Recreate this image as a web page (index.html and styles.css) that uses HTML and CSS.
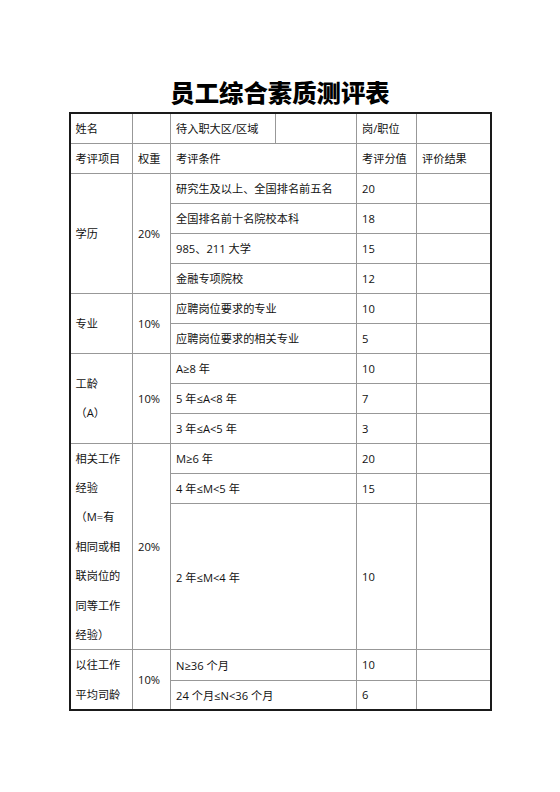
FILE: index.html
```html
<!DOCTYPE html>
<html lang="zh">
<head>
<meta charset="utf-8">
<title>员工综合素质测评表</title>
<link rel="stylesheet" href="styles.css">
</head>
<body>
<div class="page">
  <h1 class="title">员工综合素质测评表</h1>
  <table class="sheet">
    <colgroup>
      <col class="c1"><col class="c2"><col class="c3"><col class="c4"><col class="c5"><col class="c6">
    </colgroup>
    <tr class="r">
      <td>姓名</td><td></td><td>待入职大区/区域</td><td></td><td>岗/职位</td><td></td>
    </tr>
    <tr class="r">
      <td>考评项目</td><td>权重</td><td colspan="2">考评条件</td><td>考评分值</td><td>评价结果</td>
    </tr>

    <tr class="r g">
      <td rowspan="4">学历</td><td rowspan="4">20%</td><td colspan="2">研究生及以上、全国排名前五名</td><td>20</td><td></td>
    </tr>
    <tr class="r"><td colspan="2">全国排名前十名院校本科</td><td>18</td><td></td></tr>
    <tr class="r"><td colspan="2">985、211 大学</td><td>15</td><td></td></tr>
    <tr class="r"><td colspan="2">金融专项院校</td><td>12</td><td></td></tr>

    <tr class="r g">
      <td rowspan="2">专业</td><td rowspan="2">10%</td><td colspan="2">应聘岗位要求的专业</td><td>10</td><td></td>
    </tr>
    <tr class="r"><td colspan="2">应聘岗位要求的相关专业</td><td>5</td><td></td></tr>

    <tr class="r g">
      <td rowspan="3" class="multi">工龄<br>（A）</td><td rowspan="3">10%</td><td colspan="2">A≥8 年</td><td>10</td><td></td>
    </tr>
    <tr class="r"><td colspan="2">5 年≤A&lt;8 年</td><td>7</td><td></td></tr>
    <tr class="r"><td colspan="2">3 年≤A&lt;5 年</td><td>3</td><td></td></tr>

    <tr class="r g">
      <td rowspan="3" class="multi">相关工作<br>经验<br>（M=有<br>相同或相<br>联岗位的<br>同等工作<br>经验）</td><td rowspan="3">20%</td><td colspan="2">M≥6 年</td><td>20</td><td></td>
    </tr>
    <tr class="r"><td colspan="2">4 年≤M&lt;5 年</td><td>15</td><td></td></tr>
    <tr class="tall"><td colspan="2">2 年≤M&lt;4 年</td><td>10</td><td></td></tr>

    <tr class="r g">
      <td rowspan="2" class="multi">以往工作<br>平均司龄</td><td rowspan="2">10%</td><td colspan="2">N≥36 个月</td><td>10</td><td></td>
    </tr>
    <tr class="r"><td colspan="2">24 个月≤N&lt;36 个月</td><td>6</td><td></td></tr>
  </table>
</div>
</body>
</html>
```

FILE: styles.css
```css
html, body {
  margin: 0;
  padding: 0;
  background: #ffffff;
}

body {
  font-family: "Open Sans", "Noto Sans CJK SC", sans-serif;
  color: #111111;
}

.page {
  width: 560px;
  padding-top: 77px;
}

.title {
  margin: 0 0 5px 0;
  height: 30px;
  line-height: 30px;
  text-align: center;
  font-family: "Noto Sans CJK SC", sans-serif;
  font-size: 24.4px;
  font-weight: 900;
  color: #000000;
}

.sheet {
  margin: 0 auto;
  width: 421px;
  table-layout: fixed;
  border-collapse: collapse;
  border: 2px solid #1a1a1a;
  font-size: 11.2px;
}

.c1 { width: 63px; }
.c2 { width: 38px; }
.c3 { width: 105px; }
.c4 { width: 81px; }
.c5 { width: 60px; }
.c6 { width: 74px; }

.sheet td {
  border: 1px solid #989898;
  padding: 0 5px;
  vertical-align: middle;
  text-align: left;
  white-space: nowrap;
  overflow: hidden;
}

.r { height: 30px; }
.tall { height: 146px; }

.sheet .g td {
  border-top: 1.5px solid #222222;
}

.sheet td.multi {
  line-height: 29.4px;
  padding-top: 0;
  padding-bottom: 0;
}
```
